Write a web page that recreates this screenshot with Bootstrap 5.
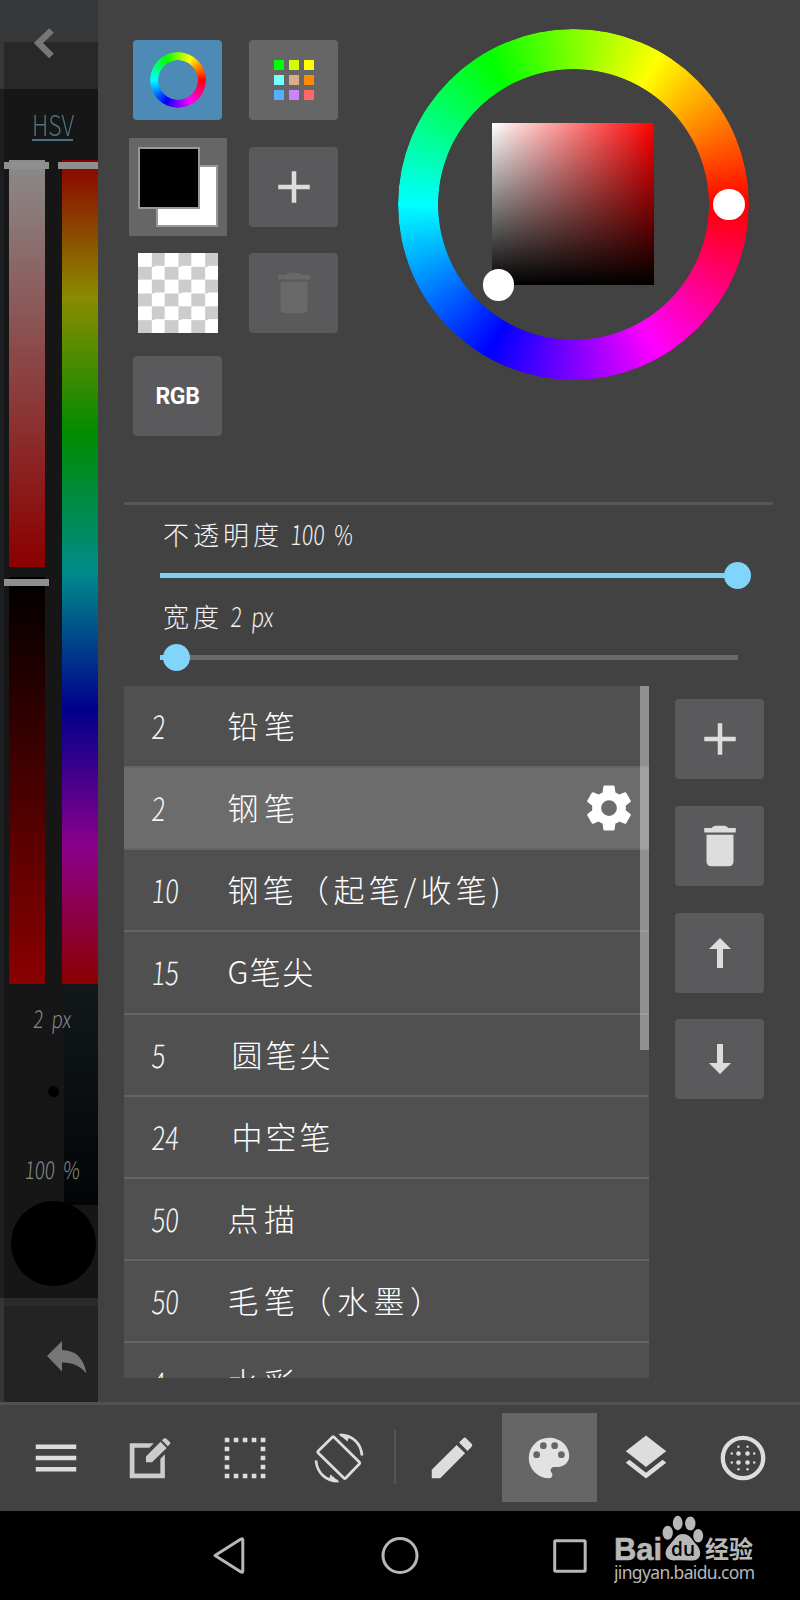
<!DOCTYPE html>
<html lang="zh">
<head>
<meta charset="utf-8">
<meta name="viewport" content="width=device-width, initial-scale=1">
<title>画笔与颜色</title>
<link href="https://cdn.jsdelivr.net/npm/bootstrap@5.3.0/dist/css/bootstrap.min.css" rel="stylesheet">
<style>
body{width:800px;height:1600px;overflow:hidden;background:#000;color:#f4f4f4;font-family:"Noto Sans CJK SC",sans-serif;font-weight:300;line-height:1}
svg{display:block;flex:none}
.workspace{height:1402px}
/* dimmed canvas side */
.side{width:98px;background:#36383a;flex:none}
.edge{width:4px;background:linear-gradient(#36383a 0 89px,#1c1f21 89px 1298px,#33363a 1298px)}
.strip{width:94px;flex:none}
.s-top{height:42px;background:#36383a}
.s-back{height:47px;background:#282828}
.s-main{height:1209px;background:linear-gradient(#12181b,#020506) right 895px/34px 221px no-repeat #161616}
.s-gap{height:8px;background:#2b2b2b}
.s-undo{height:96px;background:#232323}
.hsv{height:71px;padding:20px 0 0 28px;color:#4b7284;font-size:29px}
.hsv span{display:inline-block;width:41px;height:32px;border-bottom:2px solid #4b7284;white-space:nowrap}
.hsv b{display:inline-block;font-weight:300;transform:scaleX(.79);transform-origin:0 0}
.v1{height:407px;margin:0 4px 0 5px;background:linear-gradient(#8b8b8b,#8b0000)}
.v2{height:407px;margin:10px 4px 0 5px;background:linear-gradient(#000,#8b0000)}
.hue{height:824px;margin-left:4px;background:linear-gradient(#8b0000,#8b8b00 16.67%,#008b00 33.3%,#008b8b 50%,#00008b 66.67%,#8b008b 83.3%,#8b0000)}
.v1::before,.v2::before,.hue::before{content:"";display:block;position:relative;height:7px;top:2px;left:-5px;width:45px;background:#8f8f8f}
.hue::before{left:-4px;width:40px}
.sv{width:45px}.hv{width:40px;margin-left:9px}
.s-text{font-size:24px;color:#8a8a8a;height:24px;text-align:center;padding-left:4px;white-space:nowrap;transform:scaleX(.78) skewX(-6deg);word-spacing:5px}
.dot{width:11px;height:11px;border-radius:50%;background:#000;margin:56px 0 0 43.5px}
.disc{width:85px;height:85px;border-radius:50%;background:#000;margin:20px 0 0 6.5px}
/* panel */
.pane{width:702px;background:#424242;padding:0 27px 0 26px}
.picker{height:502px}
.c1{width:98px;margin-left:5px;padding-top:40px}
.c2{width:89px;margin-left:22px;padding-top:40px}
.tile{width:89px;height:80px;border:0;border-radius:4px;background:#5a5a5c;color:#ddd;padding:0;display:flex;align-items:center;justify-content:center;flex:none}
.c1 .tile{position:relative;left:-.5px}
.tile.on{background:#4d8ab5}.tile.lit{background:#666}
.ring{border-radius:50%;background:conic-gradient(from 90deg,#f00,#f0f,#00f,#0ff,#0f0,#ff0,#f00)}
.ring.mini{width:56px;height:56px;-webkit-mask:radial-gradient(circle,transparent 19.5px,#000 20px)}
.ring.big{width:351px;height:351px;-webkit-mask:radial-gradient(circle,transparent 135px,#000 135.8px)}
.swgrid{display:grid;grid-template-columns:repeat(3,10px);gap:5px}
.swgrid i{height:10px}
.fgbg{width:98px;height:98px;background:#666;margin-top:18px;position:relative}
.fgbg i{position:absolute;width:62px;height:62px;border:2px solid #999;left:9px;top:9px;background:#000}
.fgbg i:first-child{left:27px;top:27px;background:#fff}
.check{width:80px;height:80px;margin-top:17px;background:conic-gradient(#ccc 25%,#fff 0 50%,#ccc 0 75%,#fff 0) 0 0/26.67px 26.67px}
.rgb{font:700 23px Roboto,sans-serif;letter-spacing:-.3px;color:#fff;margin-top:23px;padding-top:1px}
.wheel{width:351px;height:351px;margin:29px 0 0 60px;position:relative}
.field{position:absolute;left:94px;top:94px;width:162px;height:162px;background:linear-gradient(transparent,#000),linear-gradient(90deg,#fff,#f00)}
.knob{position:absolute;width:31.4px;height:31.4px;border-radius:50%;background:#fff}
.rule{height:3px;background:#575757}
.lab{height:68px;padding:11px 0 0 39px;font-size:26px;line-height:36px;letter-spacing:4px;white-space:nowrap}
.lab em{display:inline-block;font-size:27px;font-style:normal;font-weight:300;letter-spacing:0;word-spacing:6px;line-height:30px;margin-left:-2px;transform:scaleX(.78) skewX(-6deg);transform-origin:0 50%}
.track{height:5px;margin:0 35.5px 0 36px;background:#6a6a6a;position:relative}
.track>i{display:block;height:5px;background:#81cff5}
.track>b{position:absolute;width:27px;height:27px;top:-11px;margin-left:-13.5px;border-radius:50%;background:#81d4fa}
.brushes{width:525px;height:692px;margin-top:26px;overflow:hidden;background:#505050;position:relative;border-radius:0}
.brush{height:82.15px;border:0;border-bottom:2.5px solid #646464;border-radius:0!important;background:none;color:#fff;padding:0 13px 0 28px;display:flex;align-items:center;flex:none}
.brush.sel{background:#6c6c6c}
.num{width:75.5px;font-size:32px;color:#f4f4f4;padding-bottom:2px;transform:scaleX(.79) skewX(-6deg);transform-origin:0 50%}
.nm{font-size:31px;letter-spacing:5.5px;flex:1;white-space:nowrap;padding-bottom:3px}
.nm.tight{letter-spacing:4.3px}
.nm.inset{padding-left:4px;letter-spacing:3px}
.bar{position:absolute;right:0;top:0;width:9px;height:364px;background:rgba(255,255,255,.37)}
.acts{margin:39px 0 0 26px;gap:26.8px}
/* bottom */
.tools{height:109px;background:#424242;border-top:3px solid #515151;padding:0 7px 2px 9px;color:#ddd}
.tool{width:94.3px;height:89px;padding-top:1px;display:flex;align-items:center;justify-content:center;flex:none}
.tool.r{width:97px}.tool.on{width:95px;margin:0 1px;background:#666}
.sep{width:2px;height:54px;margin:0 8px 0 7.800px;background:#555;flex:none}
.sysnav{height:89px;background:#000;color:#b8b8b8;padding:26px 0 0 211px}
.wm{width:146px;height:72px;margin:-23px 0 0 24px}
</style>
</head>
<body>
<svg width="0" height="0" class="position-absolute"><defs>
<symbol id="plus" viewBox="0 0 24 24"><path fill="currentColor" d="M19 13h-6v6h-2v-6H5v-2h6V5h2v6h6z"/></symbol>
<symbol id="trash" viewBox="0 0 24 24"><path fill="currentColor" d="M6 19a2 2 0 0 0 2 2h8a2 2 0 0 0 2-2V7H6zM19 4h-3.300c-.6-.7-1.200-1-2-1h-3.400c-.8 0-1.400.3-2 1H5v2h14z"/></symbol>
</defs></svg>
<div class="workspace d-flex">
  <aside class="side d-flex">
    <div class="edge"></div>
    <div class="strip">
      <div class="s-top"></div>
      <div class="s-back"><svg width="94" height="47" overflow="visible"><path d="M47.500-11.500 34.500 1l13 13" fill="none" stroke="#777" stroke-width="6.500"/></svg></div>
      <div class="s-main">
        <div class="hsv"><span><b>HSV</b></span></div>
        <div class="d-flex">
          <div class="sv"><div class="v1"></div><div class="v2"></div></div>
          <div class="hv"><div class="hue"></div></div>
        </div>
        <div class="s-text" style="margin-top:22px">2 px</div>
        <div class="dot"></div>
        <div class="s-text" style="margin-top:60px">100 %</div>
        <div class="disc"></div>
      </div>
      <div class="s-gap"></div>
      <div class="s-undo"><svg width="94" height="96"><path d="M43 50 58 35v9c14 0 22 9 24.500 23.500C76 60 69 56.500 58 56.500v9z" fill="#777"/></svg></div>
    </div>
  </aside>
  <main class="pane">
    <div class="picker d-flex">
      <div class="c1 d-flex flex-column align-items-center">
        <button class="tile on"><span class="ring mini"></span></button>
        <div class="fgbg"><i></i><i></i></div>
        <div class="check"></div>
        <button class="tile rgb">RGB</button>
      </div>
      <div class="c2 d-flex flex-column">
        <button class="tile lit"><span class="swgrid"><i style="background:#0f0"></i><i style="background:#d4ff00"></i><i style="background:#ff0"></i><i style="background:#7ff"></i><i style="background:#dcac8c"></i><i style="background:#ff8c00"></i><i style="background:#55b0ff"></i><i style="background:#cb84ff"></i><i style="background:#ff6868"></i></span></button>
        <button class="tile" style="margin-top:27px"><svg width="54" height="54"><use href="#plus"/></svg></button>
        <button class="tile" style="margin-top:26px;color:#69696a"><svg width="54" height="54"><use href="#trash"/></svg></button>
      </div>
      <div class="wheel">
        <div class="ring big"></div>
        <div class="field"></div>
        <i class="knob" style="left:315.300px;top:159.600px"></i>
        <i class="knob" style="left:84.600px;top:240.300px"></i>
      </div>
    </div>
    <div class="rule"></div>
    <div class="lab">不透明度 <em>100 %</em></div>
    <div class="track"><i style="width:100%"></i><b style="left:100%"></b></div>
    <div class="lab" style="height:77px;padding-top:20px">宽度 <em>2 px</em></div>
    <div class="track"><i style="width:3%"></i><b style="left:2.900%"></b></div>
    <div class="d-flex">
      <div class="brushes d-flex flex-column list-group">
        <div class="brush list-group-item"><span class="num">2</span><span class="nm">铅笔</span></div>
        <div class="brush list-group-item sel"><span class="num">2</span><span class="nm">钢笔</span><svg width="54" height="54" viewBox="0 0 24 24"><path fill="#fff" d="M19.430 12.980a7.800 7.800 0 0 0 0-1.960l2.110-1.650a.5.5 0 0 0 .12-.64l-2-3.460a.5.5 0 0 0-.61-.22l-2.490 1a7.300 7.300 0 0 0-1.690-.98l-.38-2.650A.49.49 0 0 0 14 2h-4a.49.49 0 0 0-.49.420l-.38 2.650c-.61.250-1.170.590-1.690.980l-2.490-1a.5.5 0 0 0-.61.220l-2 3.460a.5.5 0 0 0 .12.640l2.110 1.650a7.900 7.900 0 0 0 0 1.960l-2.110 1.650a.5.5 0 0 0-.12.640l2 3.460c.12.220.390.300.610.220l2.490-1c.52.400 1.080.730 1.690.980l.38 2.650c.03.240.240.420.490.420h4c.25 0 .46-.18.490-.42l.38-2.650a7.700 7.700 0 0 0 1.690-.98l2.490 1c.23.090.49 0 .61-.22l2-3.460a.5.5 0 0 0-.12-.64zM12 15.500a3.500 3.500 0 1 1 0-7 3.500 3.500 0 0 1 0 7z"/></svg></div>
        <div class="brush list-group-item"><span class="num">10</span><span class="nm tight">钢笔（起笔/收笔)</span></div>
        <div class="brush list-group-item"><span class="num">15</span><span class="nm" style="letter-spacing:1.500px">G笔尖</span></div>
        <div class="brush list-group-item"><span class="num">5</span><span class="nm inset">圆笔尖</span></div>
        <div class="brush list-group-item"><span class="num">24</span><span class="nm inset">中空笔</span></div>
        <div class="brush list-group-item"><span class="num">50</span><span class="nm">点描</span></div>
        <div class="brush list-group-item"><span class="num">50</span><span class="nm">毛笔（水墨）</span></div>
        <div class="brush list-group-item"><span class="num">4</span><span class="nm">水彩</span></div>
        <div class="bar"></div>
      </div>
      <div class="acts d-flex flex-column">
        <button class="tile"><svg width="54" height="54"><use href="#plus"/></svg></button>
        <button class="tile"><svg width="54" height="54"><use href="#trash"/></svg></button>
        <button class="tile"><svg width="22" height="30"><path fill="currentColor" d="M11 0 22 11h-8v19H8V11H0z"/></svg></button>
        <button class="tile"><svg width="22" height="30"><path fill="currentColor" d="M11 30 22 19h-8V0H8v19H0z"/></svg></button>
      </div>
    </div>
  </main>
</div>
<nav class="tools d-flex align-items-center">
  <div class="tool"><svg width="54" height="54" viewBox="0 0 24 24"><path fill="currentColor" d="M3 6h18v2H3zm0 5h18v2H3zm0 5h18v2H3z"/></svg></div>
  <div class="tool"><svg width="54" height="54" viewBox="0 0 24 24"><path fill="#ccc" d="M3 5.400h10.700l-2 2H5.100v11.500h11.500v-6.600l2-2V21H3zM10.200 11.300l6.500-6.500 2.700 2.700-6.500 6.400h-2.700zM17.300 4.100l.9-.8c.3-.3.700-.3 1 0l1.600 1.600c.3.300.3.700 0 1l-.9.900z"/></svg></div>
  <div class="tool"><svg width="54" height="54" viewBox="0 0 24 24"><path fill="none" stroke="currentColor" stroke-width="2.050" stroke-dasharray="2.050 1.950" d="M3 4h18.050M3 20h18.050M4 7v12M20 7v12"/></svg></div>
  <div class="tool"><svg width="54" height="54" viewBox="0 0 54 54"><g fill="none" stroke="currentColor" stroke-width="2.700" stroke-linejoin="round"><path d="M20.500 6a1 1 0 0 1 1.400 0L47.500 31.300a1 1 0 0 1 0 1.400L33.500 47.300a1 1 0 0 1-1.400 0L6 21.700a1 1 0 0 1 0-1.400z"/><path d="M28 3.800C40 4 49 12 50 24.500M26 50.200C14 50 5 42 4 29.500"/></g><path fill="currentColor" d="m26 2.500 9.500 8 1.500-4.500zM28 51.500l-9.500-8-1.500 4.500z"/></svg></div>
  <div class="sep"></div>
  <div class="tool r"><svg width="54" height="54" viewBox="0 0 24 24"><path fill="currentColor" d="M3 17.250V21h3.750L17.810 9.940l-3.750-3.750zM20.710 7.040a1 1 0 0 0 0-1.410l-2.340-2.340a1 1 0 0 0-1.410 0l-1.830 1.830 3.750 3.750z"/></svg></div>
  <div class="tool r on"><svg width="54" height="54" viewBox="0 0 24 24"><path fill="#e2e2e2" d="M12 3a9 9 0 0 0 0 18c.83 0 1.500-.67 1.500-1.500 0-.39-.15-.74-.39-1.010-.23-.26-.38-.61-.38-.99 0-.83.670-1.500 1.500-1.500H16c2.760 0 5-2.240 5-5 0-4.420-4.030-8-9-8zm-5.500 9a1.500 1.500 0 1 1 0-3 1.500 1.500 0 0 1 0 3zm3-4a1.500 1.500 0 1 1 0-3 1.500 1.500 0 0 1 0 3zm5 0a1.500 1.500 0 1 1 0-3 1.500 1.500 0 0 1 0 3zm3 4a1.500 1.500 0 1 1 0-3 1.500 1.500 0 0 1 0 3z"/></svg></div>
  <div class="tool r"><svg width="54" height="54" viewBox="0 0 24 24"><path fill="currentColor" d="m11.990 18.540-7.370-5.730L3 14.070l9 7 9-7-1.630-1.270zM12 16l7.360-5.730L21 9l-9-7-9 7 1.630 1.270z"/></svg></div>
  <div class="tool r"><svg width="54" height="54" viewBox="0 0 54 54"><circle cx="27" cy="27" r="20.200" fill="none" stroke="currentColor" stroke-width="4.300"/><g fill="currentColor"><circle cx="22.500" cy="22.500" r="2.300"/><circle cx="31.500" cy="22.500" r="2.300"/><circle cx="22.500" cy="31.500" r="2.300"/><circle cx="31.500" cy="31.500" r="2.300"/><circle cx="22.500" cy="15.800" r="1.200"/><circle cx="31.500" cy="15.800" r="1.200"/><circle cx="22.500" cy="38.200" r="1.200"/><circle cx="31.500" cy="38.200" r="1.200"/><circle cx="15.800" cy="22.500" r="1.200"/><circle cx="15.800" cy="31.500" r="1.200"/><circle cx="38.200" cy="22.500" r="1.200"/><circle cx="38.200" cy="31.500" r="1.200"/></g></svg></div>
</nav>
<footer class="sysnav d-flex">
  <svg width="379" height="40" fill="none" stroke="currentColor" stroke-width="3" stroke-linejoin="round"><path d="M4 18.500 30 2q1.800-.8 1.800 1v31q0 1.800-1.800 1z"/><circle cx="189" cy="18.500" r="17"/><rect x="343.700" y="3.700" width="30.500" height="30.500" rx="1"/></svg>
  <svg class="wm" viewBox="0 0 146 72" fill="#b8b8b8">
    <text x="0" y="45.500" font-family="Liberation Sans" font-weight="700" font-size="32" textLength="48" lengthAdjust="spacingAndGlyphs" stroke="#b8b8b8" stroke-width=".6">Bai</text>
    <ellipse cx="53.700" cy="18.700" rx="5.200" ry="7"/><ellipse cx="63.700" cy="9" rx="4.900" ry="7.200"/><ellipse cx="76.300" cy="9.500" rx="5.200" ry="7"/><ellipse cx="84.200" cy="21.800" rx="5" ry="6.700"/>
    <path d="M69 20c7 0 9 6 13 10 6 6 6 16-3 16.500-7 .3-14-.5-19 0-9 0-11-9-5-15 5-5 7-11.500 14-11.500z"/>
    <text x="57" y="42" fill="#000" font-family="Open Sans" font-weight="600" font-size="20" textLength="24" lengthAdjust="spacingAndGlyphs">du</text>
    <text x="91" y="44" font-family="Noto Sans CJK SC" font-weight="700" font-size="24" textLength="48">经验</text>
    <text x="0" y="65" font-family="Noto Sans" font-weight="400" font-size="17.500" textLength="141">jingyan.baidu.com</text>
  </svg>
</footer>
<script src="https://cdn.jsdelivr.net/npm/bootstrap@5.3.0/dist/js/bootstrap.bundle.min.js"></script>
</body>
</html>
